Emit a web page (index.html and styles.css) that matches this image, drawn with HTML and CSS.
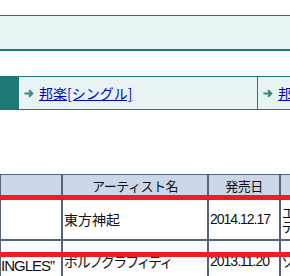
FILE: index.html
```html
<!DOCTYPE html>
<html lang="ja">
<head>
<meta charset="utf-8">
<link rel="stylesheet" href="styles.css">
</head>
<body>
<div class="page">
  <div class="topbox"></div>

  <nav class="catnav">
    <div class="catnav-lead"></div>
    <div class="catnav-cell">
      <svg class="arrow" width="10" height="9" viewBox="0 0 10 9"><path d="M0.5 4.5H8M5 1.2L8.3 4.5L5 7.8" fill="none" stroke="#3d8482" stroke-width="2"/></svg>
      <a href="#" class="catnav-link">邦楽[シングル]</a>
    </div>
    <div class="catnav-cell">
      <svg class="arrow" width="10" height="9" viewBox="0 0 10 9"><path d="M0.5 4.5H8M5 1.2L8.3 4.5L5 7.8" fill="none" stroke="#3d8482" stroke-width="2"/></svg>
      <a href="#" class="catnav-link">邦楽[アルバム]</a>
    </div>
  </nav>

  <table class="chart">
    <colgroup>
      <col class="c-title"><col class="c-artist"><col class="c-date"><col class="c-label">
    </colgroup>
    <tr class="head">
      <th></th>
      <th class="th-text">アーティスト名</th>
      <th class="th-text">発売日</th>
      <th class="th-text">レーベル</th>
    </tr>
    <tr class="row">
      <td></td>
      <td class="artist">東方神起</td>
      <td class="date">2014.12.17</td>
      <td class="label">エイベックス・エンタ<br>テインメント</td>
    </tr>
    <tr class="row">
      <td class="title"><span class="title-line">INGLES”</span></td>
      <td class="artist">ポルノグラフィティ</td>
      <td class="date">2013.11.20</td>
      <td class="label">ソニー・ミュージック</td>
    </tr>
  </table>

  <div class="mark mark-1"></div>
  <div class="mark mark-2"></div>
</div>
</body>
</html>
```

FILE: styles.css
```css
html, body {
  margin: 0;
  padding: 0;
  overflow: hidden;
  background: #ffffff;
}

.page {
  position: relative;
  width: 620px;
  padding-top: 15px;
  font-family: "Noto Sans CJK JP", "Liberation Sans", sans-serif;
}

.topbox {
  height: 33px;
  background: #e8f4f4;
  border-top: 1px solid #1f7a77;
  border-bottom: 2px solid #1f7a77;
}

.catnav {
  display: flex;
  margin-top: 25px;
  height: 32px;
  border-top: 1px solid #1f7a77;
  border-bottom: 1px solid #1f7a77;
  background: #e8f4f4;
}

.catnav-lead {
  width: 19px;
  background: #1f7a77;
}

.catnav-cell {
  display: flex;
  align-items: center;
  gap: 5px;
  width: 239px;
  padding-left: 5px;
  box-sizing: border-box;
  border-right: 1px solid #1f7a77;
}

.catnav-cell + .catnav-cell {
  width: 240px;
}

.arrow {
  display: block;
  flex: none;
}

.catnav-link {
  color: #0000cc;
  font-size: 14px;
  line-height: 16px;
  text-decoration: underline;
  white-space: nowrap;
}

.chart {
  margin-top: 64px;
  border-collapse: separate;
  border-spacing: 0;
  table-layout: fixed;
  width: 420px;
}

.c-title { width: 62px; }
.c-artist { width: 146px; }
.c-date { width: 72px; }
.c-label { width: 140px; }

.chart th,
.chart td {
  box-sizing: border-box;
  border: 1px solid #55647b;
  padding: 0 1px;
  overflow: hidden;
  white-space: nowrap;
}

.head {
  height: 24px;
}

.head th {
  background: #ccd8ea;
  font-weight: normal;
  font-size: 13px;
  letter-spacing: -0.5px;
  color: #111111;
  text-align: center;
  line-height: 16px;
}

.row {
  height: 42px;
}

.row td {
  font-size: 14px;
  line-height: 14px;
  color: #111111;
  vertical-align: middle;
}

.artist {
  font-feature-settings: "palt";
}

.date {
  font-family: "Liberation Sans", sans-serif;
  letter-spacing: -1px;
}

.label {
  font-feature-settings: "palt";
}

.row td.title {
  vertical-align: top;
  text-align: right;
  padding: 17px 7px 0 0;
}

.title-line {
  font-family: "Liberation Sans", sans-serif;
  font-size: 15px;
  letter-spacing: -1px;
}

.mark {
  position: absolute;
  left: 0;
  right: 0;
  height: 5px;
  background: #ee1c25;
}

.mark-1 { top: 195px; }
.mark-2 { top: 252px; }
```
